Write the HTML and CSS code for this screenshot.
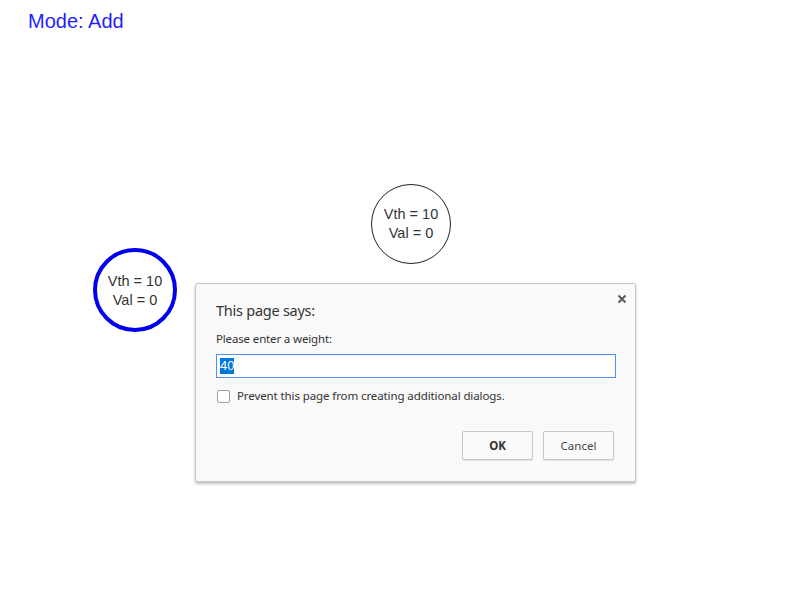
FILE: index.html
```html
<!DOCTYPE html>
<html>
<head>
<meta charset="utf-8">
<link rel="stylesheet" href="styles.css">
</head>
<body>
<div class="mode">Mode: Add</div>
<div class="canvas">
  <div class="node node-a"><span>Vth = 10</span><span>Val = 0</span></div>
  <div class="node node-b selected"><span>Vth = 10</span><span>Val = 0</span></div>
</div>
<div class="dialog">
  <button class="close" aria-label="Close">
    <svg width="10" height="10" viewBox="0 0 10 10"><path d="M1.5 1.5 L8.5 8.5 M8.5 1.5 L1.5 8.5" stroke="#5a5a5a" stroke-width="2" fill="none"/></svg>
  </button>
  <div class="title">This page says:</div>
  <div class="label">Please enter a weight:</div>
  <div class="input"><span class="sel">40</span></div>
  <label class="check"><span class="box"></span><span>Prevent this page from creating additional dialogs.</span></label>
  <div class="buttons">
    <div class="btn ok">OK</div>
    <div class="btn">Cancel</div>
  </div>
</div>
</body>
</html>
```
FILE: styles.css
```css
html, body {
  margin: 0;
  padding: 0;
  background: #fff;
  width: 795px;
  height: 595px;
  overflow: hidden;
  position: relative;
}
.mode {
  font-family: "Liberation Sans", Arial, sans-serif;
  font-size: 20px;
  color: #1f1fff;
  padding: 10px 0 0 28px;
  line-height: 22px;
}
.canvas {
  position: absolute;
  inset: 0;
}
.node {
  position: absolute;
  width: 80px;
  height: 80px;
  box-sizing: border-box;
  border: 1px solid #222;
  border-radius: 50%;
  display: flex;
  flex-direction: column;
  align-items: center;
  justify-content: center;
  font-family: "Liberation Sans", Arial, sans-serif;
  font-size: 14.5px;
  line-height: 19px;
  color: #333;
}
.node-a { left: 371px; top: 184px; }
.node-b.selected {
  left: 93px;
  top: 248px;
  width: 84px;
  height: 84px;
  border: 4px solid #0000ee;
  padding-top: 2px;
}
.dialog {
  position: absolute;
  left: 195px;
  top: 283px;
  width: 441px;
  height: 199px;
  box-sizing: border-box;
  background: #f9f9f9;
  border: 1px solid #c8c8c8;
  border-radius: 2px;
  box-shadow: 0 2px 3px rgba(0,0,0,0.25);
  padding: 16px 21px 21px 20px;
  font-family: "Noto Sans", "Open Sans", sans-serif;
  color: #333;
  display: flex;
  flex-direction: column;
}
.close {
  position: absolute;
  right: 8px;
  top: 10px;
  width: 10px;
  height: 10px;
  padding: 0;
  border: 0;
  background: none;
  display: flex;
}
.title {
  font-size: 14.5px;
  line-height: 20px;
  color: #333;
  letter-spacing: -0.25px;
}
.label {
  margin-top: 11px;
  font-size: 11.5px;
  line-height: 16px;
  color: #333;
  letter-spacing: -0.15px;
}
.input {
  margin-top: 7px;
  width: 400px;
  height: 24px;
  box-sizing: border-box;
  border: 1px solid #4d90fe;
  background: #fff;
  padding: 3px 3px;
  font-family: "Liberation Sans", Arial, sans-serif;
  font-size: 13px;
  line-height: 16px;
  display: flex;
  align-items: center;
}
.sel {
  background: #0078d7;
  color: #fff;
  line-height: 16px;
}
.check {
  margin-top: 10px;
  display: flex;
  align-items: center;
  font-size: 11.5px;
  line-height: 16px;
  letter-spacing: -0.1px;
  color: #333;
}
.box {
  width: 13px;
  height: 13px;
  box-sizing: border-box;
  border: 1px solid #a0a0a0;
  border-radius: 2px;
  background: #fff;
  margin: 0 7px 0 1px;
}
.buttons {
  margin-top: auto;
  display: flex;
  justify-content: flex-end;
  gap: 10px;
}
.btn {
  width: 71px;
  height: 29px;
  box-sizing: border-box;
  border: 1px solid #c6c6c6;
  border-radius: 2px;
  background: #fafafa;
  box-shadow: 0 1px 0 rgba(0,0,0,0.08);
  display: flex;
  align-items: center;
  justify-content: center;
  font-size: 11.5px;
  color: #444;
}
.btn.ok {
  font-weight: bold;
  color: #333;
}
```
